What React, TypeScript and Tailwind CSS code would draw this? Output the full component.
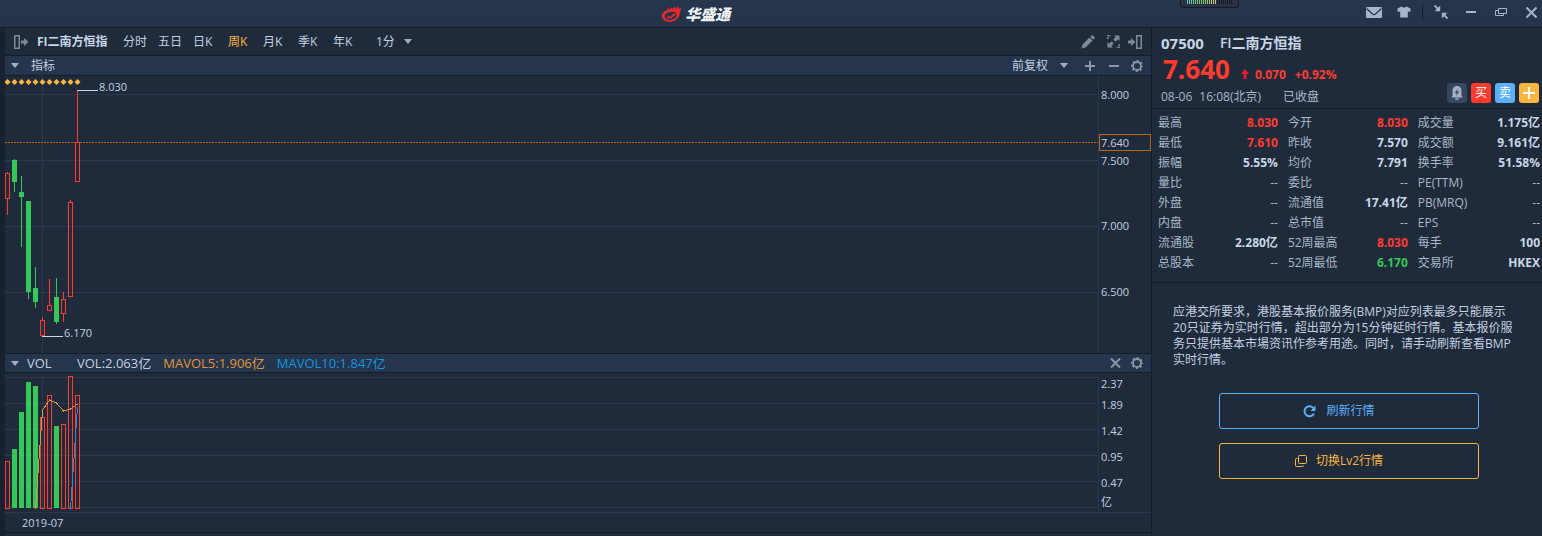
import type { ReactNode } from 'react';

const UP = '#ff3b30';
const DOWN = '#34c759';
const GRID = '#2a384f';

type Candle = {
  high: number;
  top: number;
  bottom: number;
  low: number;
  volTop: number;
  up: boolean;
};

// y positions inside the price and volume plots
const CANDLES: Candle[] = [
  { high: 96, top: 97, bottom: 123, low: 139, volTop: 88, up: true },
  { high: 83, top: 84, bottom: 106, low: 116, volTop: 76, up: false },
  { high: 100, top: 116, bottom: 121, low: 171, volTop: 39, up: false },
  { high: 125, top: 125, bottom: 216, low: 223, volTop: 9, up: false },
  { high: 191, top: 212, bottom: 226, low: 232, volTop: 13, up: false },
  { high: 241, top: 244, bottom: 260, low: 260, volTop: 44, up: true },
  { high: 203, top: 229, bottom: 235, low: 235, volTop: 22, up: true },
  { high: 202, top: 221, bottom: 246, low: 248, volTop: 53, up: false },
  { high: 216, top: 223, bottom: 238, low: 246, volTop: 51, up: true },
  { high: 124, top: 126, bottom: 221, low: 221, volTop: 3, up: true },
  { high: 14, top: 66, bottom: 106, low: 106, volTop: 22, up: true },
];

const VOL_BASE = 136;
const candleX = (i: number) => i * 7;

const PERIODS = ['分时', '五日', '日K', '周K', '月K', '季K', '年K'];

type Quote = { label: string; value: string; tone?: 'up' | 'down' };

const QUOTES: Quote[][] = [
  [{ label: '最高', value: '8.030', tone: 'up' }, { label: '今开', value: '8.030', tone: 'up' }, { label: '成交量', value: '1.175亿' }],
  [{ label: '最低', value: '7.610', tone: 'up' }, { label: '昨收', value: '7.570' }, { label: '成交额', value: '9.161亿' }],
  [{ label: '振幅', value: '5.55%' }, { label: '均价', value: '7.791' }, { label: '换手率', value: '51.58%' }],
  [{ label: '量比', value: '--' }, { label: '委比', value: '--' }, { label: 'PE(TTM)', value: '--' }],
  [{ label: '外盘', value: '--' }, { label: '流通值', value: '17.41亿' }, { label: 'PB(MRQ)', value: '--' }],
  [{ label: '内盘', value: '--' }, { label: '总市值', value: '--' }, { label: 'EPS', value: '--' }],
  [{ label: '流通股', value: '2.280亿' }, { label: '52周最高', value: '8.030', tone: 'up' }, { label: '每手', value: '100' }],
  [{ label: '总股本', value: '--' }, { label: '52周最低', value: '6.170', tone: 'down' }, { label: '交易所', value: 'HKEX' }],
];

function toneClass(q: Quote) {
  if (q.tone === 'up') return 'font-bold text-[#ff3b30]';
  if (q.tone === 'down') return 'font-bold text-[#34c759]';
  return q.value === '--' ? 'font-normal text-[#a9b7c9]' : 'font-bold text-[#c8d6e8]';
}

function IconButton({ label, className = '', children }: { label: string; className?: string; children: ReactNode }) {
  return (
    <button type="button" aria-label={label} className={`flex shrink-0 items-center justify-center ${className}`}>
      {children}
    </button>
  );
}

function Caret() {
  return (
    <svg width="8" height="5" viewBox="0 0 8 5" className="shrink-0 text-[#a3b0c2]">
      <path d="M0 0h8L4 5z" fill="currentColor" />
    </svg>
  );
}

function GearIcon() {
  return (
    <svg width="12" height="12" viewBox="0 0 12 12" fill="none" stroke="currentColor">
      <circle cx="6" cy="6" r="4" strokeWidth="1.8" />
      <circle cx="6" cy="6" r="5.2" strokeWidth="1.6" strokeDasharray="2 2.084" strokeDashoffset="1" />
    </svg>
  );
}

function TitleBar() {
  return (
    <header className="relative flex h-7 items-center border-b border-[#151d2b] bg-linear-to-b from-[#26364c] to-[#24334a] pr-1 text-[#a7b4c8]">
      <div className="ml-[43%] flex items-center gap-[3px]">
        <svg width="21" height="16" viewBox="0 0 21 16">
          <path
            d="M1 9.8C1 6.500 4 4.600 7 4L6 2.200l3.200 1.200L9.600 1l2.200 2L13.600.4l.8 2.400L17.600 0l-.4 2.800 3.200-1-1.600 2.600 2 .1-2.200 1.700c.9 5-4 9.600-10.400 9.600C4 15.800 1 13.400 1 9.800zm2.600.6c0 2.300 2.200 3.600 5 3.600 4 0 7.200-2.400 7.200-5 0-2.100-2-3.300-4.800-3.200C7.200 6 3.600 7.700 3.600 10.400z"
            fill="#f0282d"
            fillRule="evenodd"
          />
          <path d="M5 12.600l3.200-2.900 1.500 1 2.200-1.900-.9-.8 3.600-.7-.8 3.300-.9-.8-3 2.900-1.700-1.200-2 1.500z" fill="#f0282d" />
        </svg>
        <span className="text-[15px] leading-5 font-black text-[#eef2f7] italic">华盛通</span>
      </div>

      {/* activity meter that hangs from the top edge */}
      <div className="absolute top-0 right-[303px] flex h-2 w-[59px] justify-center rounded-b-sm border border-t-0 border-[#131a26] bg-[#2b3144]">
        <svg width="46" height="4" shapeRendering="crispEdges">
          {Array.from({ length: 23 }, (_, i) => (
            <rect key={i} x={i * 2} y="0" width="1" height="4" fill={i > 14 ? '#161c29' : `hsl(${170 - i * 8} 50% 62%)`} />
          ))}
        </svg>
      </div>

      <div className="mb-[3px] ml-auto flex items-center">
        <IconButton label="消息" className="w-4">
          <svg width="16" height="11" viewBox="0 0 16 11">
            <rect width="16" height="11" rx="1" fill="currentColor" />
            <path d="M.5 1.500L6.500 7q1.500 1.200 3 0l6-5.500" fill="none" stroke="#25354b" strokeWidth="1.200" />
          </svg>
        </IconButton>
        <IconButton label="换肤" className="ml-[15px] w-[14px]">
          <svg width="14" height="12" viewBox="0 0 14 12">
            <path d="M4.500 .5Q7 2.800 9.500 .5L13.500 2.500v3.300l-2.700-.3V11.500H3.200V5.500L.5 5.800V2.500z" fill="currentColor" />
          </svg>
        </IconButton>
        <span className="ml-[11px] h-[15px] w-px bg-[#151d2b]" />
        <IconButton label="迷你模式" className="ml-[11px] w-[14px]">
          <svg width="14" height="14" viewBox="0 0 14 14" fill="none" stroke="currentColor" strokeWidth="1.800">
            <path d="M.5 .5l4.500 4.500M13.500 13.500L9.500 9.500" />
            <path d="M6.200 .6v5.600H.6zM7.800 13.400V7.800H13.400z" fill="currentColor" stroke="none" />
          </svg>
        </IconButton>
        <IconButton label="最小化" className="ml-4 w-[14px]">
          <svg width="10" height="2">
            <rect width="10" height="2" fill="currentColor" />
          </svg>
        </IconButton>
        <IconButton label="还原" className="ml-4 w-[14px]">
          <svg width="12" height="8" viewBox="0 0 12 8" fill="none" stroke="currentColor">
            <path d="M3.500 .5h8v5h-8zM3.500 2.500h-3v5h8v-2" />
          </svg>
        </IconButton>
        <IconButton label="关闭" className="ml-4 w-[14px]">
          <svg width="11" height="11" viewBox="0 0 11 11" stroke="currentColor" strokeWidth="2">
            <path d="M.5 .5l10 10M10.500 .5l-10 10" />
          </svg>
        </IconButton>
      </div>
    </header>
  );
}

function Toolbar() {
  return (
    <div className="flex h-7 items-center border-b border-[#151d2b] pr-[9px] pl-[9px] text-[#808a97]">
      <IconButton label="收起左栏">
        <svg width="14" height="14" viewBox="0 0 14 14">
          <path d="M.75 .75h4.500v12.500H.75z" fill="none" stroke="currentColor" strokeWidth="1.500" />
          <path d="M7 5.500h3V3l4.500 4-4.500 4V8.500H7z" fill="currentColor" />
        </svg>
      </IconButton>
      <h1 className="ml-[9px] w-[86px] shrink-0 font-bold whitespace-nowrap text-[#c8d6e8]">FI二南方恒指</h1>
      <nav className="flex">
        {PERIODS.map(p => (
          <button
            key={p}
            type="button"
            className={`w-[35px] shrink-0 text-left ${p === '周K' ? 'text-[#ffb640]' : 'text-[#c3d0e2]'}`}
          >
            {p}
          </button>
        ))}
      </nav>
      <label className="ml-2 flex items-center gap-2">
        <select aria-label="分钟周期" className="w-5 appearance-none bg-transparent text-[#c3d0e2]">
          <option>1分</option>
        </select>
        <Caret />
      </label>
      <div className="ml-auto flex items-center gap-2">
        <IconButton label="画线" className="mr-1">
          <svg width="14" height="14" viewBox="0 0 14 14" fill="currentColor">
            <path d="M.5 13.500l1-4L8.500 2.500l3 3-7 7zM9.300 1.700L10.600 .4q.6-.5 1.200 0l1.800 1.800q.5.6 0 1.200L12.300 4.700z" />
          </svg>
        </IconButton>
        <IconButton label="全屏">
          <svg width="13" height="13" viewBox="0 0 13 13">
            <path d="M.75 4V.75H4M12.250 9v3.250H9" fill="none" stroke="currentColor" strokeWidth="1.500" strokeDasharray="2 1" />
            <path d="M7 .5h5.500v5.500l-1.700-1.700L8.400 6.700 6.300 4.600l2.400-2.400zM6 12.500H.5V7l1.700 1.700L4.600 6.300l2.100 2.100-2.400 2.400z" fill="currentColor" />
          </svg>
        </IconButton>
        <IconButton label="收起右栏">
          <svg width="14" height="14" viewBox="0 0 14 14">
            <path d="M8.750 .75h4.500v12.500h-4.500z" fill="none" stroke="currentColor" strokeWidth="1.500" />
            <path d="M0 5.500h3V3l4.500 4L3 11V8.500H0z" fill="currentColor" />
          </svg>
        </IconButton>
      </div>
    </div>
  );
}

function IndicatorBar() {
  return (
    <div className="flex h-5 items-center border-b border-[#151d2b] bg-[#25354b] pr-2 pl-[6px] text-[#8b96a4]">
      <button type="button" className="flex items-center gap-3 text-[#c3d0e2]">
        <Caret />
        指标
      </button>
      <label className="mr-[15px] ml-auto flex items-center gap-[10px] text-[#c3d0e2]">
        <select aria-label="复权方式" className="w-[38px] appearance-none bg-transparent">
          <option>前复权</option>
        </select>
        <Caret />
      </label>
      <div className="flex items-center gap-[10px]">
        <IconButton label="放大" className="w-[14px]">
          <svg width="10" height="10" fill="currentColor">
            <path d="M4 0h2v4h4v2H6v4H4V6H0V4h4z" />
          </svg>
        </IconButton>
        <IconButton label="缩小" className="w-[14px]">
          <svg width="10" height="2" fill="currentColor">
            <rect width="10" height="2" />
          </svg>
        </IconButton>
        <IconButton label="指标设置">
          <GearIcon />
        </IconButton>
      </div>
    </div>
  );
}

function CandleBody({ x, top, bottom, up }: { x: number; top: number; bottom: number; up: boolean }) {
  if (!up) return <rect x={x} y={top} width="5" height={bottom - top} fill={DOWN} />;
  return <rect x={x + 0.5} y={top + 0.5} width="4" height={bottom - top - 1} fill="none" stroke={UP} />;
}

function PriceChart() {
  return (
    <div className="flex h-[277px] text-[11px]">
      <svg width="100%" height="277" className="min-w-0 flex-1" shapeRendering="crispEdges">
        {[18, 84, 150, 216].map(y => (
          <rect key={y} x="0" y={y} width="100%" height="1" fill={GRID} />
        ))}
        <rect x="37" y="0" width="1" height="277" fill={GRID} />
        <line x1="0" x2="100%" y1="66.5" y2="66.5" stroke="#b8690f" strokeDasharray="2 1" />
        {CANDLES.map((c, i) => {
          const x = candleX(i);
          return (
            <g key={i}>
              <path d={`M${x - 0.5} 6l3-3 3 3-3 3z`} fill="#ffb640" shapeRendering="auto" />
              <rect x={x + 2} y={c.high} width="1" height={c.top - c.high} fill={c.up ? UP : DOWN} />
              <rect x={x + 2} y={c.bottom} width="1" height={c.low - c.bottom} fill={c.up ? UP : DOWN} />
              <CandleBody x={x} top={c.top} bottom={c.bottom} up={c.up} />
            </g>
          );
        })}
        <rect x="72" y="14" width="21" height="1" fill="#c8d6e8" />
        <text x="94" y="15" fill="#c3d0e2">8.030</text>
        <rect x="37" y="260" width="21" height="1" fill="#c8d6e8" />
        <text x="59" y="261" fill="#c3d0e2">6.170</text>
      </svg>
      <svg width="53" height="277" className="shrink-0" shapeRendering="crispEdges" fill="#c3d0e2">
        <rect x="0" y="0" width="1" height="277" fill={GRID} />
        <text x="3" y="23">8.000</text>
        <text x="3" y="89">7.500</text>
        <text x="3" y="154">7.000</text>
        <text x="3" y="220">6.500</text>
        <rect x="1.500" y="58.500" width="51" height="16" fill="#1f2b3a" stroke="#b8690f" />
        <text x="3" y="71">7.640</text>
      </svg>
    </div>
  );
}

function VolumeBar() {
  return (
    <div className="flex h-5 items-center border-y border-[#151d2b] bg-[#25354b] pr-2 pl-[6px] text-[#8b96a4]">
      <button type="button" className="flex w-[66px] items-center gap-2 text-[13px] text-[#c3d0e2]">
        <Caret />
        VOL
      </button>
      <p className="flex gap-3 text-[13px]">
        <span className="text-[#c3d0e2]">VOL:2.063亿</span>
        <span className="text-[#e0963a]">MAVOL5:1.906亿</span>
        <span className="text-[#1296e0]">MAVOL10:1.847亿</span>
      </p>
      <div className="ml-auto flex items-center gap-[10px]">
        <IconButton label="关闭指标">
          <svg width="11" height="10" viewBox="0 0 11 10" stroke="currentColor" strokeWidth="2">
            <path d="M1 .5l9 9M10 .5l-9 9" />
          </svg>
        </IconButton>
        <IconButton label="成交量设置">
          <GearIcon />
        </IconButton>
      </div>
    </div>
  );
}

function VolumeChart() {
  return (
    <div className="flex h-[140px] border-b border-[#2a384f] text-[11px]">
      <svg width="100%" height="139" className="min-w-0 flex-1" shapeRendering="crispEdges">
        {[4, 30, 56, 82, 108, 134].map(y => (
          <rect key={y} x="0" y={y} width="100%" height="1" fill={GRID} />
        ))}
        <rect x="37" y="0" width="1" height="137" fill={GRID} />
        {CANDLES.map((c, i) => (
          <CandleBody key={i} x={candleX(i)} top={c.volTop} bottom={c.up ? VOL_BASE : VOL_BASE - 1} up={c.up} />
        ))}
        <path d="M30.500 136L37.500 37 44.500 27 51.500 30 58.500 38 65.500 36 72.500 31" fill="none" stroke="#e0963a" />
        <path d="M65.500 136L72.500 34" fill="none" stroke="#1296e0" />
      </svg>
      <svg width="53" height="139" className="shrink-0" fill="#c3d0e2">
        <rect x="0" y="0" width="1" height="138" fill={GRID} />
        <text x="3" y="15">2.37</text>
        <text x="3" y="36">1.89</text>
        <text x="3" y="62">1.42</text>
        <text x="3" y="88">0.95</text>
        <text x="3" y="114">0.47</text>
        <text x="3" y="133">亿</text>
      </svg>
    </div>
  );
}

function QuoteHeader() {
  return (
    <section className="border-b border-[#151d2b] pt-[5px] pr-[3px] pl-[9px]">
      <h2 className="flex h-5 items-center gap-4 font-bold text-[#c8d6e8]">
        <span className="text-[15px]">07500</span>
        <span className="text-[14px] font-semibold">FI二南方恒指</span>
      </h2>
      <div className="flex h-[30px] items-baseline pl-[2px] font-bold text-[#ff3b30]">
        <span className="text-[26px] leading-8">7.640</span>
        <svg width="8" height="10" viewBox="0 0 8 10" className="ml-[11px] shrink-0">
          <path d="M4 0l4 5H5.500v5h-3V5H0z" fill="#ec1c2e" />
        </svg>
        <span className="ml-[6px]">0.070</span>
        <span className="ml-[9px]">+0.92%</span>
      </div>
      <div className="flex h-[25px] items-start">
        <p className="flex gap-[22px] pt-[6px] text-[#a9b7c9]">
          <span className="flex gap-[7px]">
            <span>08-06</span>
            <span>16:08(北京)</span>
          </span>
          <span>已收盘</span>
        </p>
        <div className="ml-auto flex gap-1 text-white">
          <IconButton label="提醒" className="size-5 rounded-[3px] bg-[#34475f] text-[#a3b1c4]">
            <svg width="12" height="14" viewBox="0 0 12 14">
              <path d="M6 0a4.500 4.500 0 0 1 4.500 4.500V9.500L11.500 11.500H.5L1.500 9.500V4.500A4.500 4.500 0 0 1 6 0zM4 12.200h4L7.400 13.800H4.600z" fill="currentColor" />
              <path d="M6.800 2.800L3.800 7h1.900l-.6 3L8.200 5.800H6.300z" fill="#34475f" />
            </svg>
          </IconButton>
          <button type="button" className="size-5 rounded-[3px] bg-[#ff3b30] leading-5">买</button>
          <button type="button" className="size-5 rounded-[3px] bg-[#5ab0fa] leading-5">卖</button>
          <IconButton label="加自选" className="size-5 rounded-[3px] bg-[#fbb640]">
            <svg width="12" height="12" fill="currentColor">
              <path d="M5 0h2v5h5v2H7v5H5V7H0V5h5z" />
            </svg>
          </IconButton>
        </div>
      </div>
    </section>
  );
}

function QuoteTable() {
  return (
    <section className="border-b border-[#151d2b] pt-1 pr-[2px] pb-[9px] pl-[6px]">
      <table className="w-full table-fixed border-collapse">
        <colgroup>
          <col className="w-[34%]" />
          <col className="w-[34%]" />
          <col className="w-[32%]" />
        </colgroup>
        <tbody>
          {QUOTES.map((row, r) => (
            <tr key={r} className="h-5">
              {row.map(q => (
                <td key={q.label} className="p-0 pr-[10px] last:pr-0">
                  <div className="flex justify-between leading-5 whitespace-nowrap">
                    <span className="text-[#a9b7c9]">{q.label}</span>
                    <span className={toneClass(q)}>{q.value}</span>
                  </div>
                </td>
              ))}
            </tr>
          ))}
        </tbody>
      </table>
    </section>
  );
}

function QuotePanel() {
  return (
    <aside className="w-[391px] shrink-0 border-l border-[#151d2b]">
      <QuoteHeader />
      <QuoteTable />
      <section className="pt-[21px] pr-[17px] pl-[21px]">
        <p className="leading-4 whitespace-nowrap text-[#c3d0e2]">
          应港交所要求，港股基本报价服务(BMP)对应列表最多只能展示
          <br />
          20只证券为实时行情，超出部分为15分钟延时行情。基本报价服
          <br />
          务只提供基本市場资讯作参考用途。同时，请手动刷新查看BMP
          <br />
          实时行情。
        </p>
        <div className="mx-auto mt-[25px] flex w-[260px] flex-col gap-[14px]">
          <button type="button" className="flex h-9 items-center justify-center gap-[10px] rounded-[3px] border border-[#5ab0fa] pr-5 text-[#5ab0fa]">
            <svg width="13" height="13" viewBox="0 0 13 13">
              <path d="M10.500 3.200A5 5 0 1 0 11 8.500" fill="none" stroke="currentColor" strokeWidth="2" />
              <path d="M12.500 .5v5.500H7.500z" fill="currentColor" />
            </svg>
            刷新行情
          </button>
          <button type="button" className="flex h-9 items-center justify-center gap-[9px] rounded-[3px] border border-[#fbb640] pr-5 text-[#fbb640]">
            <svg width="12" height="12" viewBox="0 0 12 12" fill="none" stroke="currentColor">
              <rect x="3.500" y=".5" width="8" height="8" rx="1" />
              <path d="M2.500 3.500h-1q-1 0-1 1v6q0 1 1 1h6q1 0 1-1" />
            </svg>
            切换Lv2行情
          </button>
        </div>
      </section>
    </aside>
  );
}

export default function App() {
  return (
    <div className="flex min-h-screen flex-col bg-[#1f2b3a] font-['Open_Sans','Noto_Sans_CJK_SC',sans-serif] text-[12px] leading-4 text-[#c3d0e2]">
      <TitleBar />
      <div className="flex flex-1">
        <main className="min-w-0 flex-1 border-l-[5px] border-[#172130]">
          <Toolbar />
          <IndicatorBar />
          <PriceChart />
          <VolumeBar />
          <VolumeChart />
          <div className="h-5 border-b border-[#151d2b] pl-[17px] text-[11px] leading-5">2019-07</div>
        </main>
        <QuotePanel />
      </div>
    </div>
  );
}
